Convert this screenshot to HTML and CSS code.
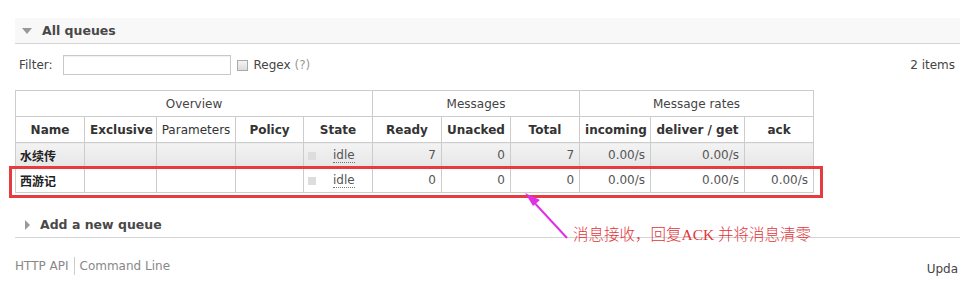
FILE: index.html
```html
<!DOCTYPE html>
<html lang="en">
  <head>
    <meta charset="UTF-8" />
    <meta name="viewport" content="width=device-width, initial-scale=1.0" />
    <title>Queues</title>
    <link rel="stylesheet" href="styles.css">
  </head>
  <body>
    <div class="page">
      <div class="section-head">
        <span class="arrow-down"></span>
        <h2>All queues</h2>
      </div>

      <div class="filter-row">
        <label for="filter">Filter:</label>
        <input type="text" id="filter" />
        <span class="check"></span>
        <span class="regex">Regex <span class="help">(?)</span></span>
        <span class="count">2 items</span>
      </div>

      <table class="queues">
        <colgroup>
          <col class="c-name" />
          <col class="c-excl" />
          <col class="c-params" />
          <col class="c-policy" />
          <col class="c-state" />
          <col class="c-num" />
          <col class="c-num" />
          <col class="c-num" />
          <col class="c-inc" />
          <col class="c-deliver" />
          <col class="c-ack" />
        </colgroup>
        <thead>
          <tr class="group">
            <th colspan="5">Overview</th>
            <th colspan="3">Messages</th>
            <th colspan="3">Message rates</th>
          </tr>
          <tr class="heads">
            <th>Name</th>
            <th>Exclusive</th>
            <th class="plain">Parameters</th>
            <th>Policy</th>
            <th>State</th>
            <th>Ready</th>
            <th>Unacked</th>
            <th>Total</th>
            <th>incoming</th>
            <th>deliver / get</th>
            <th>ack</th>
          </tr>
        </thead>
        <tbody>
          <tr class="alt">
            <td class="name">水续传</td>
            <td></td>
            <td></td>
            <td></td>
            <td class="state"><span class="dot"></span><abbr>idle</abbr></td>
            <td class="num">7</td>
            <td class="num">0</td>
            <td class="num">7</td>
            <td class="num">0.00/s</td>
            <td class="num">0.00/s</td>
            <td class="num"></td>
          </tr>
          <tr>
            <td class="name">西游记</td>
            <td></td>
            <td></td>
            <td></td>
            <td class="state"><span class="dot"></span><abbr>idle</abbr></td>
            <td class="num">0</td>
            <td class="num">0</td>
            <td class="num">0</td>
            <td class="num">0.00/s</td>
            <td class="num">0.00/s</td>
            <td class="num">0.00/s</td>
          </tr>
        </tbody>
      </table>

      <div class="section-head add">
        <span class="arrow-right"></span>
        <h2>Add a new queue</h2>
      </div>

      <div class="footer">
        <a>HTTP API</a>
        <a>Command Line</a>
        <span class="updated">Upda</span>
      </div>

      <!-- annotation drawn over the screenshot -->
      <div class="callout-box"></div>
      <svg class="callout-arrow" width="60" height="60" viewBox="0 0 60 60">
        <line x1="49" y1="52" x2="12" y2="12" stroke="#e12fe8" stroke-width="2" />
        <polygon points="7,7 22,14 15,20" fill="#e12fe8" />
      </svg>
      <div class="callout-text">消息接收，回复ACK 并将消息清零</div>
    </div>
  </body>
</html>
```

FILE: styles.css
```css
body {
  margin: 0;
  padding: 0;
  font-family: "DejaVu Sans", Verdana, sans-serif;
  font-size: 12px;
  color: #444;
  background: #fff;
}

.page {
  position: relative;
  height: 287px;
  overflow: hidden;
}

.section-head {
  display: flex;
  align-items: center;
  margin: 18px 0 0 15px;
  height: 25px;
  background: #f8f8f8;
  border-bottom: 1px solid #d4d4d4;
}

.section-head h2 {
  margin: 0;
  font-size: 12.5px;
  font-weight: bold;
  color: #484848;
}

.arrow-down {
  width: 0;
  height: 0;
  margin: 0 10px 0 7px;
  border-left: 5px solid transparent;
  border-right: 5px solid transparent;
  border-top: 6px solid #999;
}

.section-head.add {
  margin-top: 19px;
  background: #fff;
}

.arrow-right {
  width: 0;
  height: 0;
  margin: 0 10px 0 10px;
  border-top: 5px solid transparent;
  border-bottom: 5px solid transparent;
  border-left: 5px solid #999;
}

.filter-row {
  display: flex;
  align-items: center;
  height: 22px;
  margin: 10px 5px 0 19px;
  color: #444;
}

.filter-row input {
  width: 164px;
  height: 18px;
  margin: 0 6px 0 10px;
  padding: 0 1px;
  border: 1px solid #c8c8c8;
  box-shadow: inset 0 1px 1px rgba(0, 0, 0, 0.06);
}

.check {
  width: 9px;
  height: 9px;
  margin-right: 6px;
  border: 1px solid #aaa;
  background: linear-gradient(#f4f4f4, #dcdcdc);
}

.help {
  color: #999;
}

.count {
  margin-left: auto;
}

.queues {
  margin: 14px 0 0 15px;
  width: 799px;
  table-layout: fixed;
  border-collapse: collapse;
  border: 1px solid #ccc;
}

.c-name { width: 69px; }
.c-excl { width: 72px; }
.c-params { width: 79px; }
.c-policy { width: 68px; }
.c-state { width: 69px; }
.c-num { width: 69px; }
.c-inc { width: 71px; }
.c-deliver { width: 94px; }
.c-ack { width: 69px; }

.queues th,
.queues td {
  border: 1px solid #ccc;
  padding: 0 5px;
  white-space: nowrap;
  overflow: hidden;
}

.queues th {
  height: 25px;
  text-align: center;
  color: #333;
}

.queues .group th {
  font-weight: normal;
  color: #444;
}

.queues th.plain {
  font-weight: normal;
  padding: 0 2px;
}

.queues td {
  height: 24px;
  color: #555;
}

.queues tr.alt td {
  background: linear-gradient(#f3f3f3, #e6e6e6);
}

.queues td.name {
  padding-left: 4px;
  font-family: "DejaVu Sans", "Noto Sans CJK SC", sans-serif;
  font-weight: bold;
  color: #222;
}

.queues td.num {
  text-align: right;
}

.queues td.state {
  padding-left: 4px;
}

.dot {
  display: inline-block;
  width: 8px;
  height: 8px;
  margin-right: 17px;
  background: #ddd;
  vertical-align: -1px;
}

abbr {
  text-decoration: none;
  border-bottom: 1px dotted #777;
}

.footer {
  display: flex;
  align-items: center;
  margin: 19px 0 0 15px;
  height: 18px;
  color: #888;
}

.footer a {
  padding-right: 5px;
}

.footer a + a {
  padding-left: 5px;
  border-left: 1px solid #ccc;
  line-height: 18px;
}

.updated {
  margin-left: auto;
  margin-right: 2px;
  margin-top: 6px;
  color: #444;
}

.callout-box {
  position: absolute;
  left: 9px;
  top: 166px;
  width: 808px;
  height: 26px;
  border: 3px solid #e63b3f;
}

.callout-arrow {
  position: absolute;
  left: 518px;
  top: 186px;
}

.callout-text {
  position: absolute;
  left: 573px;
  top: 222px;
  font-family: "Liberation Serif", "Noto Sans CJK SC", serif;
  font-size: 15.5px;
  font-weight: 300;
  color: #e0353a;
  white-space: nowrap;
}
```
